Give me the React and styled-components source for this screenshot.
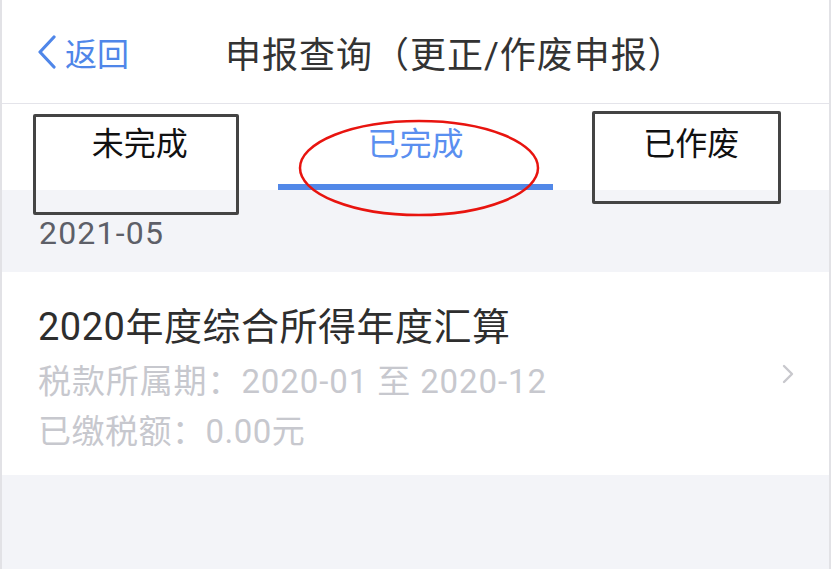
import React, { useState } from "react";
import styled, { createGlobalStyle } from "styled-components";

const GlobalStyle = createGlobalStyle`
  html, body {
    margin: 0;
    padding: 0;
    background: #f3f4f8;
  }
  body {
    font-family: Roboto, "Noto Sans CJK SC", sans-serif;
  }
`;

const Page = styled.div`
  position: relative;
  width: 831px;
  height: 569px;
  box-sizing: border-box;
  border-left: 2px solid #e2e2e6;
  border-right: 2px solid #e2e2e6;
  background: #f3f4f8;
  overflow: hidden;
`;

const Header = styled.header`
  height: 103px;
  display: flex;
  align-items: center;
  padding-left: 35px;
  background: #fff;
  border-bottom: 1px solid #e4e4ea;
`;

const Back = styled.a`
  display: flex;
  align-items: center;
  gap: 8px;
  color: #4f86e9;
  font-size: 32px;
  text-decoration: none;
  cursor: pointer;
  width: 188px;
`;

const Title = styled.h1`
  margin: 0;
  font-size: 36px;
  font-weight: 400;
  color: #333;
  letter-spacing: 1px;
`;

const Tabs = styled.nav`
  display: grid;
  grid-template-columns: repeat(3, 1fr);
  height: 86px;
  background: #fff;
`;

const Tab = styled.button`
  border: none;
  background: none;
  padding: 0;
  padding-bottom: 6px;
  font-family: inherit;
  font-size: 32px;
  color: ${(p) => (p.active ? "#5a8ff0" : "#111")};
  border-bottom: 6px solid ${(p) => (p.active ? "#5288e8" : "transparent")};
  cursor: pointer;
`;

const DateBar = styled.div`
  height: 82px;
  display: flex;
  align-items: center;
  padding-left: 37px;
  padding-top: 4px;
  box-sizing: border-box;
  font-size: 32px;
  letter-spacing: 1.2px;
  color: #5d5f68;
`;

const Card = styled.div`
  height: 203px;
  background: #fff;
  display: flex;
  align-items: center;
  padding: 0 34px 0 36px;
`;

const CardBody = styled.div`
  flex: 1;
  display: flex;
  flex-direction: column;
  gap: 6px;
  padding-top: 10px;
`;

const CardTitle = styled.div`
  font-size: 38px;
  letter-spacing: 0.5px;
  color: #2e2e2e;
  line-height: 46px;
  margin-bottom: 4px;
`;

const CardLine = styled.div`
  font-size: 33px;
  color: #c7c8ce;
  line-height: 44px;
  letter-spacing: ${(p) => p.spacing || "0.5px"};
`;

const Box = styled.div`
  position: absolute;
  box-sizing: border-box;
  border: 3px solid #444;
  border-radius: 2px;
  pointer-events: none;
`;

const Marks = styled.svg`
  position: absolute;
  left: 0;
  top: 0;
  pointer-events: none;
`;

const tabs = ["未完成", "已完成", "已作废"];

function App() {
  const [active, setActive] = useState(1);

  return (
    <Page>
      <GlobalStyle />
      <Header>
        <Back>
          <svg width="20" height="34" viewBox="0 0 20 34">
            <path d="M17 2 L3 17 L17 32" fill="none" stroke="#4f86e9" strokeWidth="3.2" strokeLinecap="round" strokeLinejoin="round" />
          </svg>
          返回
        </Back>
        <Title>申报查询（更正/作废申报）</Title>
      </Header>
      <Tabs>
        {tabs.map((t, i) => (
          <Tab key={t} active={i === active} onClick={() => setActive(i)}>
            {t}
          </Tab>
        ))}
      </Tabs>
      <DateBar>2021-05</DateBar>
      <Card>
        <CardBody>
          <CardTitle>2020年度综合所得年度汇算</CardTitle>
          <CardLine spacing="0.9px">税款所属期：2020-01 至 2020-12</CardLine>
          <CardLine>已缴税额：0.00元</CardLine>
        </CardBody>
        <svg width="14" height="20" viewBox="0 0 14 20">
          <path d="M3 2 L11 10 L3 18" fill="none" stroke="#c8c8cd" strokeWidth="2.4" strokeLinecap="round" strokeLinejoin="round" />
        </svg>
      </Card>

      <Box style={{ left: 31, top: 114, width: 206, height: 101 }} />
      <Box style={{ left: 590, top: 111, width: 189, height: 93 }} />
      <Marks width="831" height="569">
        <ellipse cx="417" cy="168" rx="119" ry="47" fill="none" stroke="#e8140f" strokeWidth="2.5" />
      </Marks>
    </Page>
  );
}

export default App;
